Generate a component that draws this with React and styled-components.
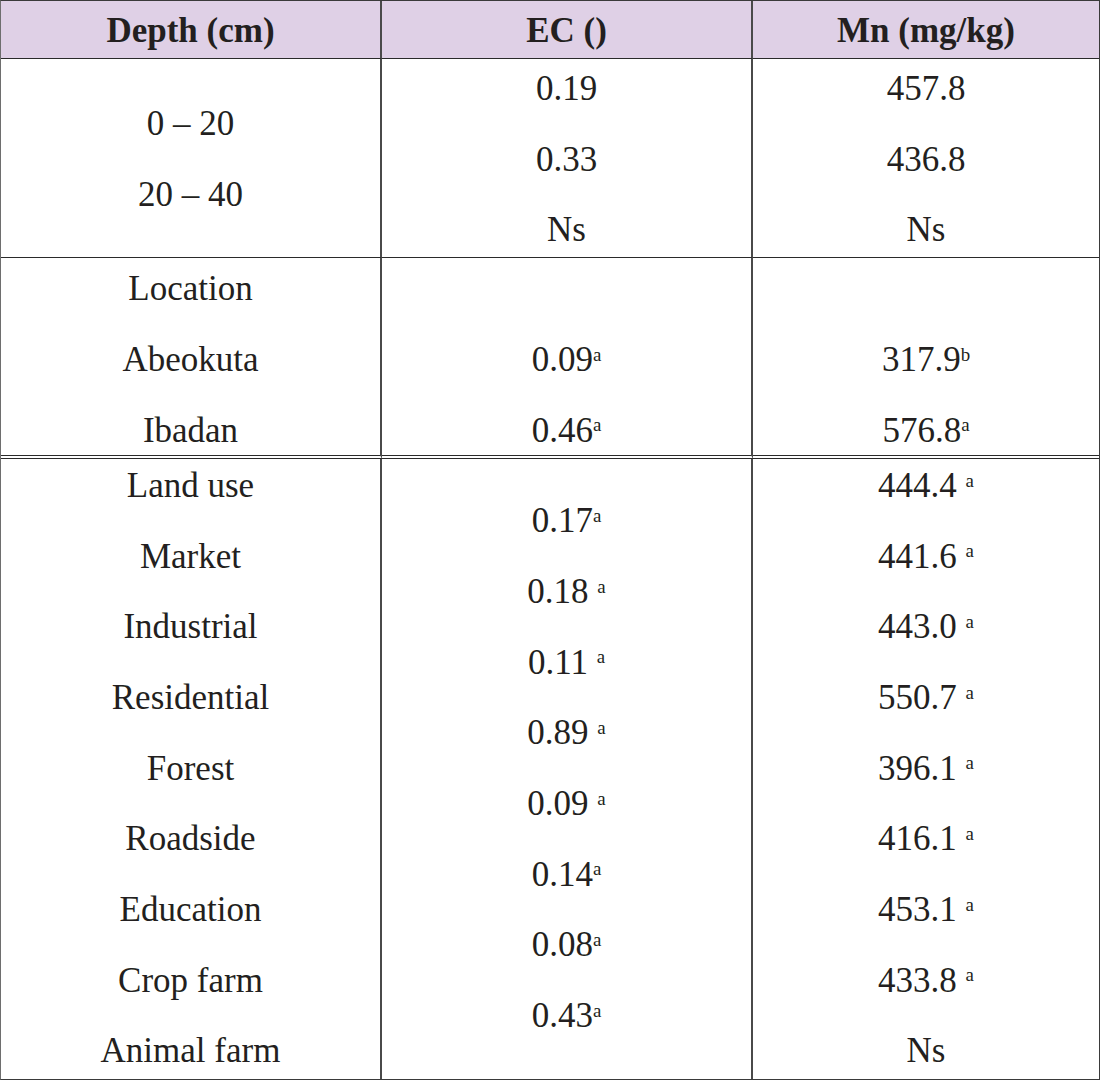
import React from 'react'
import styled, { createGlobalStyle } from 'styled-components'

const GlobalStyle = createGlobalStyle`
  html, body {
    margin: 0;
    padding: 0;
    background: #ffffff;
  }
`

const Sheet = styled.div`
  box-sizing: border-box;
  width: 1100px;
  height: 1080px;
  border: 1px solid #3a3a3a;
  border-left-color: #6e6e6e;
  display: grid;
  grid-template-columns: 381px 371px minmax(0, 1fr);
  grid-template-rows: 58px 199px 201px minmax(0, 1fr);
  font-family: 'Liberation Serif', 'Times New Roman', serif;
  color: #231f20;
  background: #ffffff;
`

const HeadCell = styled.div`
  box-sizing: border-box;
  display: flex;
  align-items: center;
  justify-content: center;
  background: #dfd0e6;
  border-bottom: 1px solid #2a2a2a;
  border-right: ${(p) => (p.last ? 'none' : '2px solid #4a4a4a')};
  font-weight: bold;
  font-size: 35px;
  padding-top: 2px;
`

const Cell = styled.div`
  box-sizing: border-box;
  min-height: 0;
  display: flex;
  flex-direction: column;
  align-items: center;
  justify-content: center;
  overflow: visible;
  padding-top: ${(p) => p.shift}px;
  border-right: ${(p) => (p.last ? 'none' : '2px solid #4a4a4a')};
  border-bottom: ${(p) =>
    p.edge === 'double' ? '4px double #2a2a2a' : p.edge === 'none' ? 'none' : '1px solid #2a2a2a'};
  font-size: 35px;
`

const Line = styled.div`
  height: 70.7px;
  line-height: 70.7px;
  flex-shrink: 0;
  white-space: pre;
  text-align: center;
`

const Sup = styled.span`
  font-size: 0.54em;
  position: relative;
  top: -0.55em;
  line-height: 0;
`

const sections = [
  {
    edge: 'single',
    shift: 4,
    cols: [
      ['0 – 20', '20 – 40'],
      ['0.19', '0.33', 'Ns'],
      ['457.8', '436.8', 'Ns'],
    ],
  },
  {
    edge: 'double',
    shift: 8,
    cols: [
      ['Location', 'Abeokuta', 'Ibadan'],
      ['', '0.09|a', '0.46|a'],
      ['', '317.9|b', '576.8|a'],
    ],
  },
  {
    edge: 'none',
    shift: 0,
    cols: [
      ['Land use', 'Market', 'Industrial', 'Residential', 'Forest', 'Roadside', 'Education', 'Crop farm', 'Animal farm'],
      ['0.17|a', '0.18 |a', '0.11 |a', '0.89 |a', '0.09 |a', '0.14|a', '0.08|a', '0.43|a'],
      ['444.4 |a', '441.6 |a', '443.0 |a', '550.7 |a', '396.1 |a', '416.1 |a', '453.1 |a', '433.8 |a', 'Ns'],
    ],
  },
]

const Value = ({ text }) => {
  const [main, sup] = text.split('|')
  return (
    <Line>
      {main || '\u00a0'}
      {sup && <Sup>{sup}</Sup>}
    </Line>
  )
}

export default function App() {
  return (
    <>
      <GlobalStyle />
      <Sheet>
        <HeadCell>Depth (cm)</HeadCell>
        <HeadCell>EC ()</HeadCell>
        <HeadCell last>Mn (mg/kg)</HeadCell>

        {sections.map((section, s) =>
          section.cols.map((col, c) => (
            <Cell key={`${s}-${c}`} edge={section.edge} shift={section.shift} last={c === 2}>
              {col.map((text, i) => (
                <Value key={i} text={text} />
              ))}
            </Cell>
          ))
        )}
      </Sheet>
    </>
  )
}
